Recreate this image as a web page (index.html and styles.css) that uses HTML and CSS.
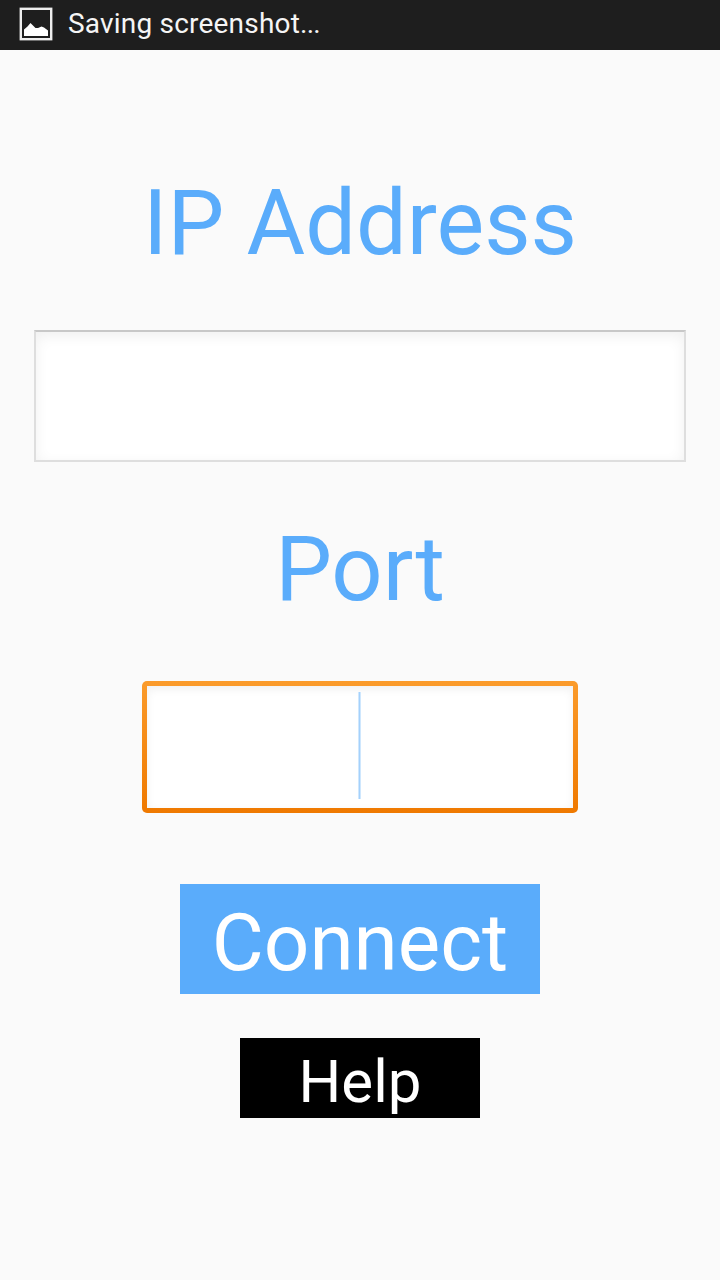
FILE: index.html
```html
<!DOCTYPE html>
<html lang="en">
<head>
<meta charset="utf-8">
<title>Connect</title>
<link rel="stylesheet" href="styles.css">
</head>
<body>
<header class="status">
<svg class="picture" width="34" height="34" viewBox="0 0 34 34"><rect x="1.8" y="1.8" width="30.4" height="30.4" fill="none" stroke="#eee" stroke-width="2.4"/><path d="M5 29V22.5L8.5 19.5L11.5 16L16.5 21L19 21L22.5 19.5L25 20.5L29 23.5V29Z" fill="#fff"/></svg>
<span class="status-text">Saving screenshot<span class="dots">...</span></span>
</header>
<main class="form">
<label class="title ip"><span>IP Address</span></label>
<div class="field address"></div>
<label class="title port"><span>Port</span></label>
<div class="field number"><span class="caret"></span></div>
<button class="connect"><span>Connect</span></button>
<button class="help"><span>Help</span></button>
</main>
</body>
</html>
```
FILE: styles.css
```css
* { box-sizing: border-box; }
body { margin: 0; width: 720px; height: 1280px; background: #fafafa; font-family: Roboto, sans-serif; overflow: hidden; }
.status { height: 50px; background: #1e1e1e; display: flex; align-items: center; padding: 0 19px 2px; gap: 15px; color: #f5f5f5; font-size: 28px; }
.picture { display: block; }
.status-text { white-space: nowrap; letter-spacing: 0.2px; padding-bottom: 2px; }
.dots { letter-spacing: -0.8px; }
.form { display: flex; flex-direction: column; align-items: center; }
.title { height: 100px; line-height: 100px; font-size: 90px; color: #5aacfb; white-space: nowrap; }
.title span, .connect span, .help span { display: inline-block; }
.ip { margin-top: 124px; }
.field { background: #fff; }
.address { width: 652px; height: 132px; margin-top: 56px; border: 2px solid #dedede; border-top-color: #c8c8c8; box-shadow: inset 0 4px 14px #f0f0f0; }
.port { margin-top: 58px; }
.number { width: 436px; height: 132px; margin-top: 61px; border-radius: 5px; background: linear-gradient(#fff, #fff) padding-box, linear-gradient(#fb9b2b, #ef7900) border-box; border: 5px solid transparent; box-shadow: inset 0 3px 10px #f0f0f0; display: flex; padding: 6px 0 0 211px; }
.caret { width: 3px; height: 107px; background: linear-gradient(90deg, #cfe7fd 0 1px, #a4d1fc 1px 2px, #cfe7fd 2px); }
button { border: 0; border-radius: 0; padding: 0; font-family: inherit; color: #fff; white-space: nowrap; }
.connect { width: 360px; height: 110px; margin-top: 71px; padding-top: 8px; background: #5aacfb; font-size: 80px; }
.help { width: 240px; height: 80px; margin-top: 44px; padding-top: 7px; background: #000; font-size: 60px; }
```
